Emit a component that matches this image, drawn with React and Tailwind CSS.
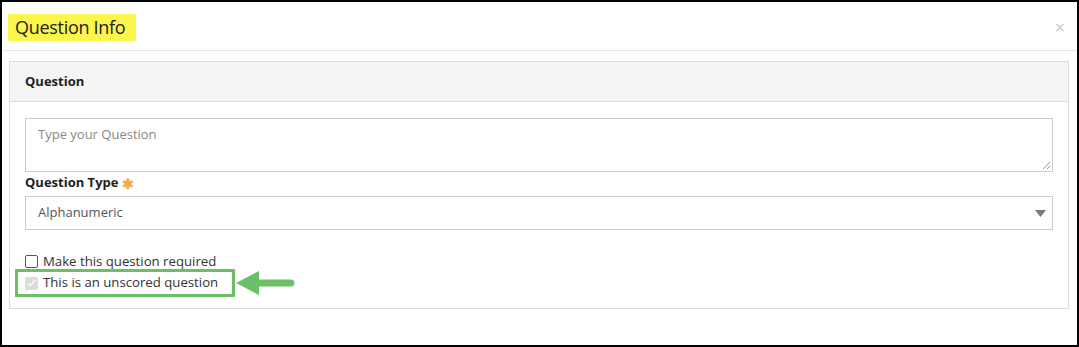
import React from "react";

export default function App() {
  return (
    <div
      className="w-[1079px] h-[347px] border-2 border-black bg-white flex flex-col text-[#333]"
      style={{ fontFamily: '"Open Sans", "Noto Sans", sans-serif' }}
    >
      {/* modal header */}
      <div className="h-[49px] shrink-0 border-b border-[#e5e5e5] flex items-start justify-between pl-[6px] pr-[12px] pt-[12px]">
        <div className="bg-[#fcf54c] h-[27px] w-[128px] flex items-center pl-[7px] text-[18px] text-[#222] tracking-[-0.3px]">
          Question Info
        </div>
        <div className="text-[#c8c8c8] text-[18px] leading-none mt-[4px]">×</div>
      </div>

      {/* body */}
      <div className="pl-[7px] pr-[8px] pt-[10px]">
        <div className="border border-[#dddddd]">
          <div className="h-[40px] bg-[#f5f5f5] border-b border-[#dddddd] flex items-center pl-[15px] text-[13px] font-bold text-[#222]">
            Question
          </div>
          <div className="px-[15px] pt-[16px] pb-[14px] flex flex-col">
            <div className="relative h-[54px] border border-[#cccccc] pl-[12px] pt-[6px] text-[13px] text-[#888]">
              Type your Question
              <svg className="absolute right-[1px] bottom-[1px]" width="9" height="9" viewBox="0 0 9 9">
                <line x1="1" y1="8" x2="8" y2="1" stroke="#999" strokeWidth="1" />
                <line x1="5" y1="8" x2="8" y2="5" stroke="#999" strokeWidth="1" />
              </svg>
            </div>
            <div className="h-[22px] flex items-center text-[13px] font-bold text-[#222]">
              Question Type
              <span className="ml-[4px] text-[#f0ad4e] text-[14px] font-bold">✱</span>
            </div>
            <div className="mt-[2px] h-[34px] border border-[#cccccc] flex items-center justify-between pl-[12px] pr-[6px] text-[13px] text-[#555]">
              Alphanumeric
              <svg width="11" height="7" viewBox="0 0 11 7">
                <path d="M0 0 L11 0 L5.5 7 Z" fill="#7a7a7a" />
              </svg>
            </div>
            <div className="mt-[21px] h-[21px] flex items-center text-[13.2px] text-[#333]">
              <span className="w-[13px] h-[13px] border border-[#555] rounded-[2px] bg-white mr-[5px]" />
              Make this question required
            </div>
            <div className="relative h-[22px] flex items-center text-[13.2px] text-[#333]">
              <span className="w-[13px] h-[13px] rounded-[2px] bg-[#dcdcdc] mr-[5px] flex items-center justify-center">
                <svg width="9" height="8" viewBox="0 0 9 8">
                  <path d="M1 4 L3.5 6.5 L8 1" fill="none" stroke="#f4f4f4" strokeWidth="1.6" />
                </svg>
              </span>
              This is an unscored question
              <div className="absolute left-[-10px] top-[-3px] w-[220px] h-[28px] border-[3px] border-[#6cbf66]" />
              <svg className="absolute left-[211px] top-[-1px]" width="60" height="24" viewBox="0 0 60 24">
                <path d="M0 12 L23 0 L23 24 Z" fill="#6cbf66" />
                <line x1="20" y1="12" x2="55" y2="12" stroke="#6cbf66" strokeWidth="7" strokeLinecap="round" />
              </svg>
            </div>
          </div>
        </div>
      </div>
    </div>
  );
}
